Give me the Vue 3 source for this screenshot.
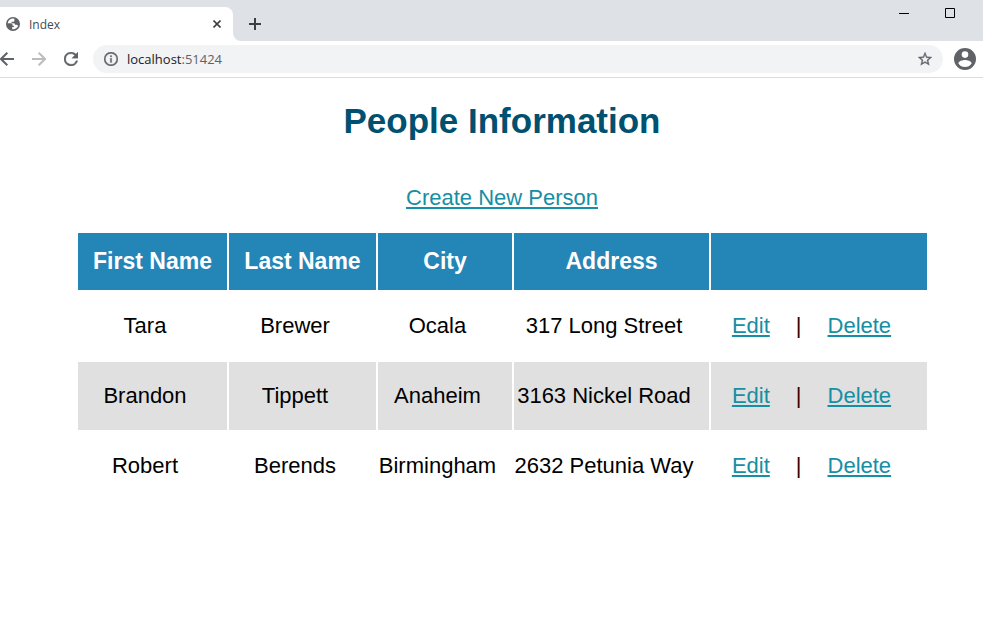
<script setup>
const people = [
  { first: 'Tara', last: 'Brewer', city: 'Ocala', address: '317 Long Street' },
  { first: 'Brandon', last: 'Tippett', city: 'Anaheim', address: '3163 Nickel Road' },
  { first: 'Robert', last: 'Berends', city: 'Birmingham', address: '2632 Petunia Way' }
]
</script>

<template>
  <div class="browser">
    <header class="tabstrip">
      <div class="tab">
        <svg class="icon-sm" viewBox="0 0 14 14" aria-hidden="true">
          <circle cx="7" cy="7" r="7" fill="#5f6368" />
          <path d="M8.400 1.800C5.200 1 2.200 3 1.700 6.200l3 .1c1.200.1 1.900.8 1.900 1.900v.5h1.300v1.300H6.200v2.200c2.600.5 5.100-1 5.900-3.500-.4-.7-1-.9-1.700-.9H8.900c0-1-.5-1.500-1.300-1.500H5.600V4.700h1.500c.8 0 1.300-.5 1.300-1.300z" fill="#fff" />
        </svg>
        <span class="tab-title">Index</span>
        <button class="plain" aria-label="Close tab">
          <svg class="close" viewBox="0 0 8 8"><path d="M.5.5l7 7M7.500.5l-7 7" stroke="#3c4043" stroke-width="1.600" /></svg>
        </button>
      </div>
      <svg class="tab-foot" viewBox="0 0 8 8" aria-hidden="true"><path d="M0 0a8 8 0 0 0 8 8H0z" fill="#fff" /></svg>
      <button class="plain new-tab" aria-label="New tab">
        <svg class="plus" viewBox="0 0 12 12"><path d="M6 0v12M0 6h12" stroke="#3c4043" stroke-width="2" /></svg>
      </button>
      <div class="window-controls">
        <button class="plain" aria-label="Minimize">
          <svg class="win" viewBox="0 0 10 10"><path d="M0 5.500h10" stroke="#000" /></svg>
        </button>
        <button class="plain" aria-label="Maximize">
          <svg class="win" viewBox="0 0 10 10"><path d="M.5.5h9v9h-9z" fill="none" stroke="#000" /></svg>
        </button>
      </div>
    </header>

    <nav class="toolbar" aria-label="Browser">
      <button class="plain" aria-label="Back">
        <svg class="icon-sm" viewBox="0 0 14 14"><path d="M14 7H1.200M7.300.7L1 7l6.300 6.300" fill="none" stroke="#5f6368" stroke-width="2" /></svg>
      </button>
      <button class="plain" aria-label="Forward">
        <svg class="icon-sm" viewBox="0 0 14 14"><path d="M0 7h12.800M6.700.7L13 7l-6.300 6.300" fill="none" stroke="#babcbe" stroke-width="2" /></svg>
      </button>
      <button class="plain" aria-label="Reload">
        <svg class="icon-sm" viewBox="4 4 16 16"><path d="M17.650 6.350A7.960 7.960 0 0 0 12 4a8 8 0 1 0 7.730 10h-2.080A6 6 0 1 1 12 6c1.660 0 3.140.69 4.220 1.780L13 11h7V4l-2.350 2.350z" fill="#5f6368" stroke="#5f6368" stroke-width=".4" /></svg>
      </button>
      <div class="omnibox">
        <svg class="icon-sm" viewBox="2 2 20 20" aria-hidden="true"><path d="M11 7h2v2h-2zm0 4h2v6h-2zm1-9a10 10 0 1 0 0 20 10 10 0 0 0 0-20zm0 18a8 8 0 1 1 0-16 8 8 0 0 1 0 16z" fill="#5f6368" stroke="#5f6368" stroke-width=".4" /></svg>
        <span class="url">localhost<span class="port">:51424</span></span>
        <button class="plain" aria-label="Bookmark">
          <svg class="icon-sm" viewBox="2 2 20 20"><path d="M22 9.240l-7.190-.62L12 2 9.190 8.630 2 9.240l5.460 4.730L5.820 21 12 17.270 18.180 21l-1.630-7.030L22 9.240zM12 15.400l-3.760 2.270 1-4.280-3.320-2.880 4.380-.38L12 6.100l1.710 4.040 4.380.38-3.320 2.880 1 4.280L12 15.400z" fill="#5f6368" stroke="#5f6368" stroke-width=".4" /></svg>
        </button>
      </div>
      <button class="plain" aria-label="Profile">
        <svg class="avatar" viewBox="2 2 20 20"><path d="M12 2a10 10 0 1 0 0 20 10 10 0 0 0 0-20zm0 3a3 3 0 1 1 0 6 3 3 0 0 1 0-6zm0 14.200a7.200 7.200 0 0 1-6-3.220c.03-1.990 4-3.080 6-3.080s5.970 1.090 6 3.080a7.200 7.200 0 0 1-6 3.220z" fill="#5f6368" /></svg>
      </button>
    </nav>

    <main class="page">
      <h1>People Information</h1>
      <p class="create"><a href="#create">Create New Person</a></p>
      <table>
        <colgroup>
          <col class="c-first"><col class="c-last"><col class="c-city"><col class="c-address"><col class="c-actions">
        </colgroup>
        <thead>
          <tr>
            <th scope="col">First Name</th>
            <th scope="col">Last Name</th>
            <th scope="col">City</th>
            <th scope="col">Address</th>
            <th></th>
          </tr>
        </thead>
        <tbody>
          <tr v-for="p in people" :key="p.first">
            <td>{{ p.first }}</td>
            <td>{{ p.last }}</td>
            <td>{{ p.city }}</td>
            <td>{{ p.address }}</td>
            <td>
              <div class="actions">
                <a href="#edit">Edit</a><span class="divider">|</span><a href="#delete">Delete</a>
              </div>
            </td>
          </tr>
        </tbody>
      </table>
    </main>
  </div>
</template>

<style>
body {
  background: #fff;
}
</style>

<style scoped>
.browser {
  font-family: "Liberation Sans", Arial, sans-serif;
  color: #000;
}
svg {
  display: block;
  flex: none;
}
.plain {
  display: block;
  flex: none;
  padding: 0;
  border: 0;
  background: none;
}
.icon-sm { width: 14px; height: 14px; }
.avatar { width: 22px; height: 22px; }
.close { width: 8px; height: 8px; }
.plus { width: 12px; height: 12px; }
.win { width: 10px; height: 10px; }

.tabstrip {
  display: flex;
  height: 41px;
  background: #dee1e6;
}
.tab {
  display: flex;
  align-items: center;
  box-sizing: border-box;
  width: 233px;
  margin-top: 7px;
  padding: 0 12px 0 6px;
  gap: 9px;
  border-radius: 0 8px 0 0;
  background: #fff;
}
.tab-title {
  flex: 1;
  font: 12px "Open Sans", "Noto Sans", sans-serif;
  color: #45494d;
}
.tab-foot {
  align-self: flex-end;
  width: 8px;
  height: 8px;
}
.new-tab {
  align-self: center;
  margin: 7px 0 0 8px;
}
.window-controls {
  display: flex;
  align-items: flex-start;
  gap: 36px;
  margin-left: auto;
  padding: 8px 28px 0 0;
}
.toolbar {
  display: flex;
  align-items: center;
  gap: 18px;
  padding: 4px 7px 4px 0;
  border-bottom: 1px solid #dadce0;
}
.omnibox {
  display: flex;
  flex: 1;
  align-items: center;
  box-sizing: border-box;
  height: 28px;
  margin: 0 -7px 0 -3px;
  padding: 0 11px;
  gap: 9px;
  border-radius: 14px;
  background: #f1f3f4;
}
.url {
  flex: 1;
  font: 13px "Open Sans", "Noto Sans", sans-serif;
  color: #202124;
}
.port { color: #5f6368; }

.page {
  padding: 22px 55px 22px 76px;
  font-size: 22px;
  line-height: 26px;
}
h1 {
  margin: 0;
  font-size: 35px;
  line-height: 42px;
  text-align: center;
  color: #00506f;
}
.create {
  margin: 43px 0 20px;
  text-align: center;
}
a {
  color: #168ea3;
  text-decoration-thickness: 2px;
  text-underline-offset: 2px;
}
table {
  width: 100%;
  min-width: 853px;
  table-layout: fixed;
  border-spacing: 2px;
}
.c-first { width: 149px; }
.c-last { width: 147px; }
.c-city { width: 134px; }
.c-address { width: 195px; }
.c-actions { width: 216px; }
th {
  padding: 15px 0;
  background: #2485b7;
  color: #fff;
  font-size: 23px;
  line-height: 27px;
  white-space: nowrap;
}
td {
  padding: 21px 15px 21px 0;
  text-align: center;
  white-space: nowrap;
}
tbody tr:nth-child(even) td {
  background: #e0e0e0;
}
.actions {
  display: flex;
  justify-content: center;
  gap: 26px;
}
.divider { color: #400000; }
</style>
